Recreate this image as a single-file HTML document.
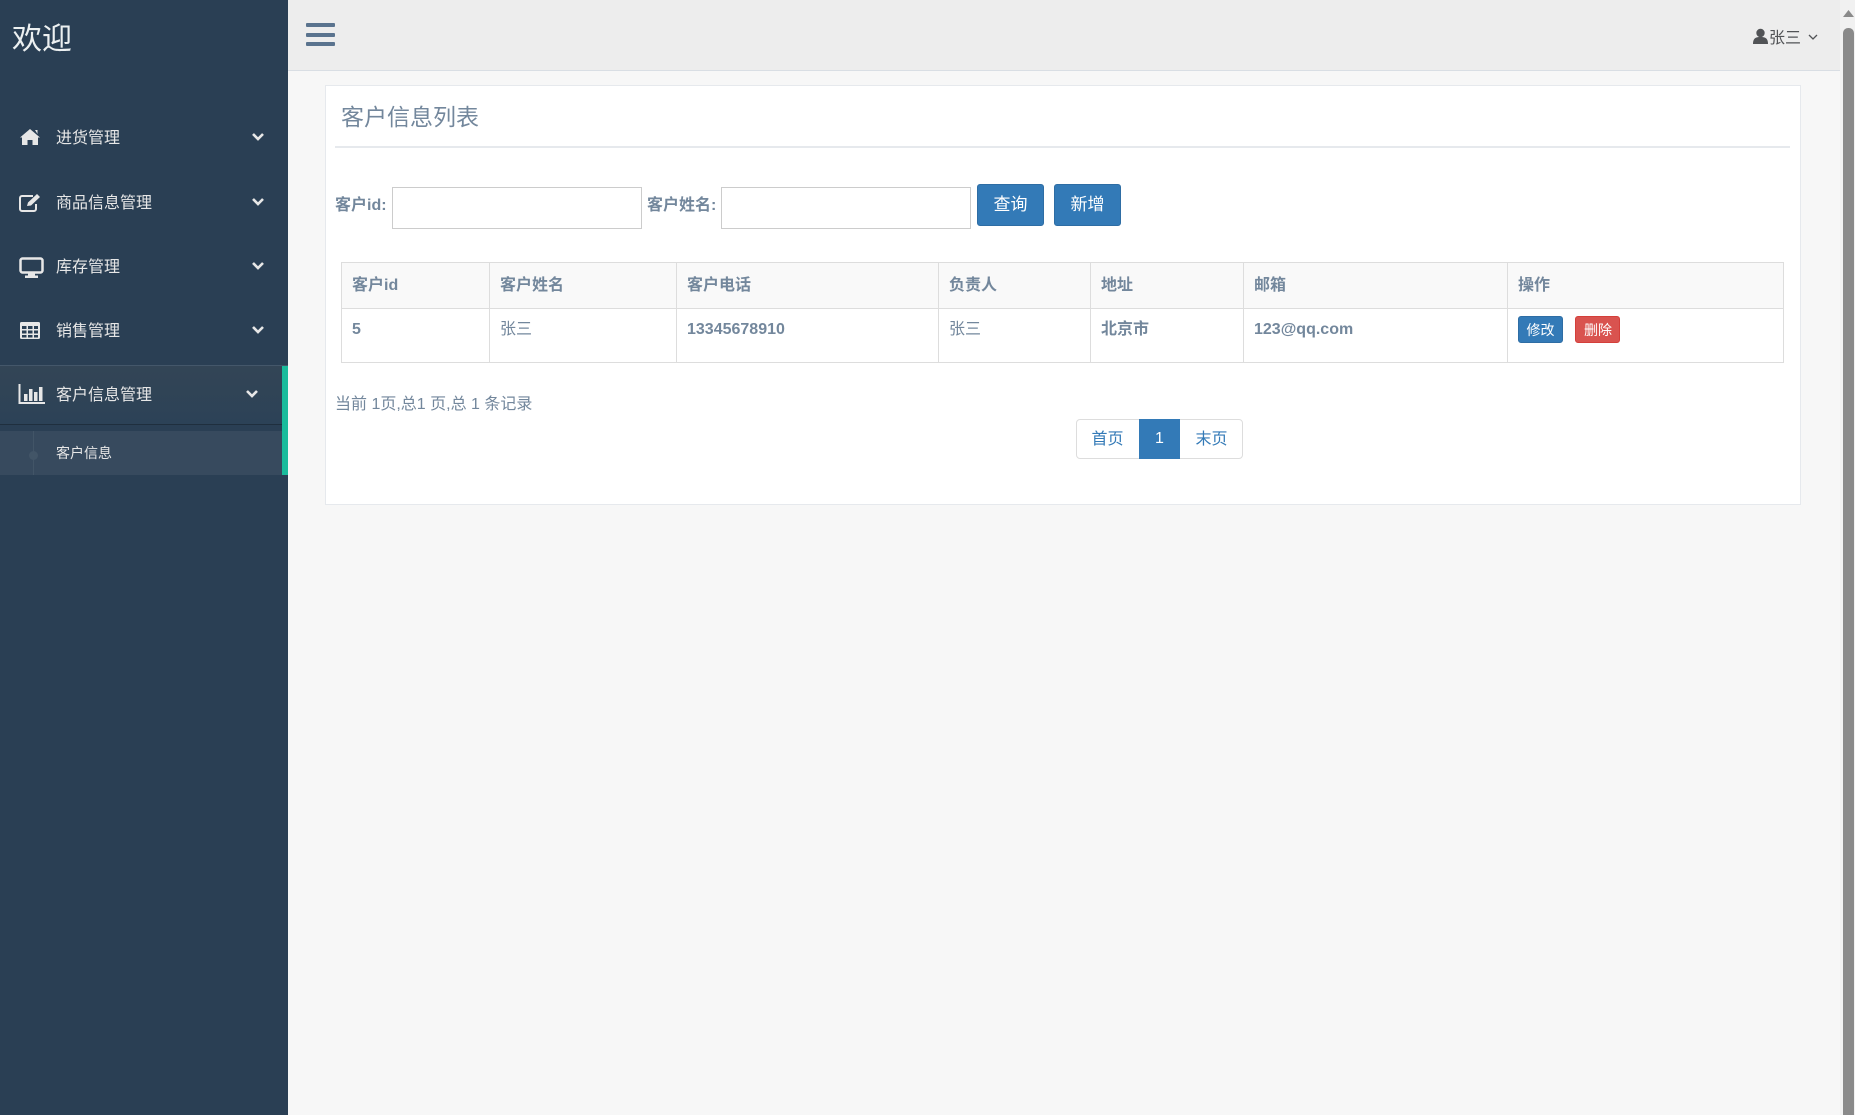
<!DOCTYPE html>
<html><head><meta charset="utf-8">
<style>
*{box-sizing:border-box;margin:0;padding:0}
body{width:1855px;height:1115px;overflow:hidden;background:#f7f7f7;font-family:"Liberation Sans","Noto Sans CJK SC",sans-serif;color:#73879c;position:relative}
.abs{position:absolute}
#side{left:0;top:0;width:288px;height:1115px;background:#2a3f54}
.ttl{left:12px;top:14px;font-size:30px;color:#ecf0f1}
.mi{left:0;width:288px;height:40px;color:#e7e7e7;font-size:16px}
.mi .ic{position:absolute;left:19px;top:9px}
.mi .tx{position:absolute;left:56px;top:10px;line-height:20px}
.mi .ch{position:absolute;left:251px;top:13px}
#hdr{left:288px;top:0;width:1552px;height:71px;background:#ededed;border-bottom:1px solid #d9dee4}
.panel{left:325px;top:85px;width:1476px;height:420px;background:#fff;border:1px solid #e6e9ed}
.lbl{font-size:16px;font-weight:bold;color:#73879c}
.inp{background:#fff;border:1px solid #ccc}
.btn{background:#337ab7;border:1px solid #2e6da4;border-radius:3px;color:#fff;font-size:17px;text-align:center}
table{position:absolute;left:341px;top:262px;width:1443px;border-collapse:collapse}
td,th{border:1px solid #ddd;text-align:left;font-size:16px;font-weight:bold;color:#73879c;padding:0 10px;vertical-align:top}
th{height:45px;background:#f9f9f9;line-height:45px}
td{height:54px;padding-top:11px;line-height:20px}
.sb{display:inline-block;height:27px;line-height:27px;width:45px;text-align:center;color:#fff;font-size:14px;font-weight:normal;border-radius:3px;margin-top:1px}
</style></head><body>
<div id="side" class="abs">
<div class="abs ttl">欢迎</div>
<div class="abs mi" style="top:119px">
 <svg class="ic" width="22" height="18" viewBox="0 0 22 18"><path d="M11 1 L1 9.5 L3 9.5 L3 17 L8.5 17 L8.5 12 L13.5 12 L13.5 17 L19 17 L19 9.5 L21 9.5 Z M16 2 L18.5 2 L18.5 6" fill="#e7e7e7"/></svg>
 <span class="tx">进货管理</span>
 <svg class="ch" width="14" height="10" viewBox="0 0 14 10"><path d="M2 2 L7 7 L12 2" stroke="#e7e7e7" stroke-width="2.6" fill="none"/></svg></div>
<div class="abs mi" style="top:184px">
 <svg class="ic" width="24" height="20" viewBox="0 0 24 20"><path d="M14 3 H3 A2 2 0 0 0 1 5 V16 A2 2 0 0 0 3 18 H15 A2 2 0 0 0 17 16 V11" stroke="#e7e7e7" stroke-width="2" fill="none"/><path d="M8 13 L9 9.5 L18 1 L21 4 L12 12.5 Z" fill="#e7e7e7"/></svg>
 <span class="tx">商品信息管理</span>
 <svg class="ch" width="14" height="10" viewBox="0 0 14 10"><path d="M2 2 L7 7 L12 2" stroke="#e7e7e7" stroke-width="2.6" fill="none"/></svg></div>
<div class="abs mi" style="top:248px">
 <svg class="ic" width="25" height="22" viewBox="0 0 25 22"><rect x="1.5" y="1.5" width="22" height="14" rx="2" stroke="#e7e7e7" stroke-width="2.5" fill="none"/><rect x="9" y="16" width="7" height="3" fill="#e7e7e7"/><rect x="6" y="18.5" width="13" height="2.5" fill="#e7e7e7"/></svg>
 <span class="tx">库存管理</span>
 <svg class="ch" width="14" height="10" viewBox="0 0 14 10"><path d="M2 2 L7 7 L12 2" stroke="#e7e7e7" stroke-width="2.6" fill="none"/></svg></div>
<div class="abs mi" style="top:312px">
 <svg class="ic" width="22" height="19" viewBox="0 0 22 19"><rect x="1" y="1" width="20" height="17" rx="1.5" fill="#e7e7e7"/><g fill="#2a3f54"><rect x="3" y="5" width="4.5" height="3"/><rect x="9" y="5" width="4.5" height="3"/><rect x="15" y="5" width="4" height="3"/><rect x="3" y="9.5" width="4.5" height="3"/><rect x="9" y="9.5" width="4.5" height="3"/><rect x="15" y="9.5" width="4" height="3"/><rect x="3" y="14" width="4.5" height="2.5"/><rect x="9" y="14" width="4.5" height="2.5"/><rect x="15" y="14" width="4" height="2.5"/></g></svg>
 <span class="tx">销售管理</span>
 <svg class="ch" width="14" height="10" viewBox="0 0 14 10"><path d="M2 2 L7 7 L12 2" stroke="#e7e7e7" stroke-width="2.6" fill="none"/></svg></div>
<div class="abs" style="left:0;top:365px;width:288px;height:59px;background:linear-gradient(#334556,#2c4257);border-top:1px solid #44576a;box-shadow:0 1px 0 #1f2f3e"></div>
<div class="abs" style="left:0;top:431px;width:282px;height:44px;background:#374a5e"></div>
<div class="abs" style="left:33px;top:431px;width:1px;height:44px;background:#425567"></div>
<div class="abs" style="left:29px;top:451px;width:9px;height:9px;border-radius:50%;background:#425567"></div>
<div class="abs" style="left:282px;top:366px;width:6px;height:109px;background:#1abc9c"></div>
<div class="abs mi" style="top:376px">
 <svg class="ic" width="28" height="22" viewBox="0 0 28 22" style="left:18px;top:7px"><path d="M1.5 1 V20 H27" stroke="#e7e7e7" stroke-width="2" fill="none"/><g fill="#e7e7e7"><rect x="6" y="11" width="3.5" height="7"/><rect x="11" y="6" width="3.5" height="12"/><rect x="16" y="9" width="3.5" height="9"/><rect x="21" y="4" width="3.5" height="14"/></g></svg>
 <span class="tx">客户信息管理</span>
 <svg class="ch" width="14" height="10" viewBox="0 0 14 10" style="left:245px"><path d="M2 2 L7 7 L12 2" stroke="#e7e7e7" stroke-width="2.6" fill="none"/></svg></div>
<div class="abs" style="left:56px;top:443px;font-size:14px;color:#e7e7e7;line-height:20px">客户信息</div>
</div>

<div id="hdr" class="abs">
 <div class="abs" style="left:18px;top:23px;width:29px;height:4px;background:#5a738e;border-radius:1px"></div>
 <div class="abs" style="left:18px;top:33px;width:29px;height:4px;background:#5a738e;border-radius:1px"></div>
 <div class="abs" style="left:18px;top:42px;width:29px;height:4px;background:#5a738e;border-radius:1px"></div>
 <svg class="abs" style="left:1465px;top:28px" width="15" height="16" viewBox="0 0 15 16"><circle cx="7.5" cy="5" r="4.2" fill="#515356"/><path d="M0 16 C0 10 3 9 7.5 9 C12 9 15 10 15 16 Z" fill="#515356"/></svg>
 <div class="abs" style="left:1481px;top:29px;font-size:16px;color:#515356;line-height:20px">张三</div>
 <svg class="abs" style="left:1520px;top:34px" width="10" height="7" viewBox="0 0 10 7"><path d="M1 1 L5 5 L9 1" stroke="#515356" stroke-width="1.3" fill="none"/></svg>
</div>
<div class="abs" style="left:1840px;top:0;width:15px;height:1115px;background:#f1f1f1"></div>
<div class="abs" style="left:1843px;top:28px;width:11px;height:1087px;background:#8a8a8a;border-radius:5px 5px 0 0"></div>
<svg class="abs" style="left:1842px;top:9px" width="13" height="9" viewBox="0 0 13 9"><path d="M1 8 L6.5 1 L12 8 Z" fill="#8a8a8a"/></svg>

<div class="abs panel"></div>
<div class="abs" style="left:341px;top:103px;font-size:23px;color:#73879c;line-height:28px">客户信息列表</div>
<div class="abs" style="left:335px;top:146px;width:1455px;height:2px;background:#e6e9ed"></div>

<div class="abs lbl" style="left:335px;top:196px;line-height:20px">客户id:</div>
<div class="abs inp" style="left:392px;top:187px;width:250px;height:42px"></div>
<div class="abs lbl" style="left:647px;top:196px;line-height:20px">客户姓名:</div>
<div class="abs inp" style="left:721px;top:187px;width:250px;height:42px"></div>
<div class="abs btn" style="left:977px;top:184px;width:67px;height:42px;line-height:40px">查询</div>
<div class="abs btn" style="left:1054px;top:184px;width:67px;height:42px;line-height:40px">新增</div>

<table>
<tr><th style="width:148px">客户id</th><th style="width:187px">客户姓名</th><th style="width:262px">客户电话</th><th style="width:152px">负责人</th><th style="width:153px">地址</th><th style="width:264px">邮箱</th><th>操作</th></tr>
<tr><td>5</td><td style="font-weight:normal">张三</td><td>13345678910</td><td style="font-weight:normal">张三</td><td>北京市</td><td>123@qq.com</td><td style="padding-top:6px"><span class="sb" style="background:#337ab7;border:1px solid #2e6da4">修改</span> <span class="sb" style="background:#d9534f;border:1px solid #d43f3a;margin-left:8px">删除</span></td></tr>
</table>

<div class="abs" style="left:335px;top:395px;font-size:16px;line-height:20px">当前 1页,总1 页,总 1 条记录</div>
<div class="abs" style="left:1076px;top:419px;width:167px;height:40px;border:1px solid #ddd;border-radius:4px;background:#fff"></div>
<div class="abs" style="left:1076px;top:420px;width:63px;height:40px;line-height:40px;text-align:center;color:#337ab7;font-size:16px">首页</div>
<div class="abs" style="left:1139px;top:419px;width:41px;height:40px;line-height:40px;text-align:center;color:#fff;background:#337ab7;font-size:16px">1</div>
<div class="abs" style="left:1180px;top:420px;width:63px;height:40px;line-height:40px;text-align:center;color:#337ab7;font-size:16px">末页</div>
</body></html>
